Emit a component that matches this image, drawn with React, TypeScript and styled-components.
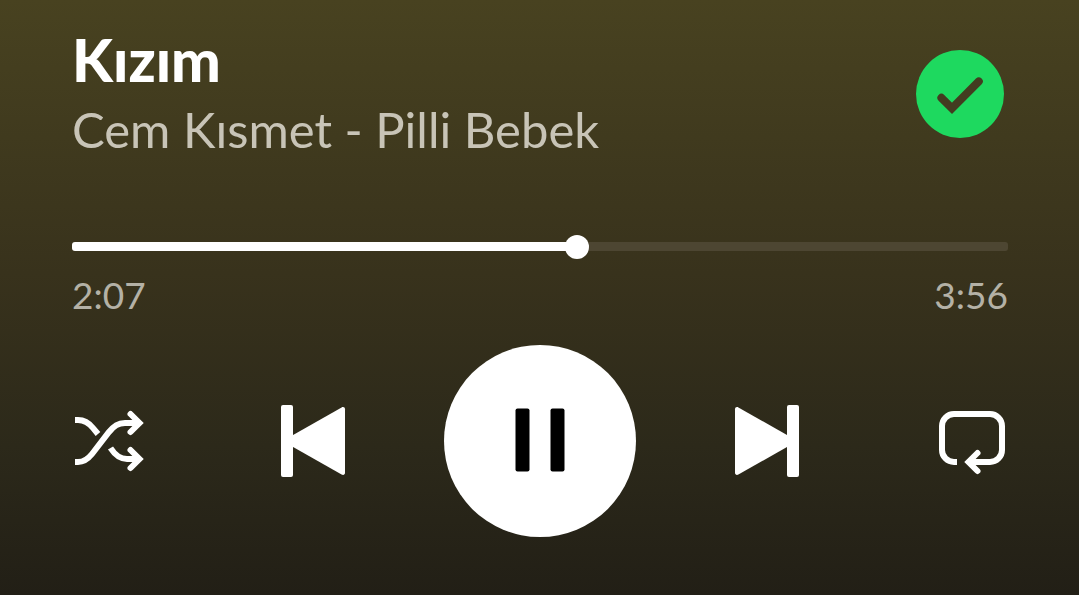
import React, { useState } from "react";
import styled, { createGlobalStyle } from "styled-components";

const GlobalStyle = createGlobalStyle`
  * { box-sizing: border-box; }
  body { margin: 0; background: #221f16; }
`;

const Player = styled.main`
  min-height: 100vh;
  padding: 28px 71px 56px 72px;
  background: linear-gradient(180deg, #484220 0%, #38321c 46%, #2c291a 75%, #221f16 100%);
  color: #ffffff;
  font-family: Lato, "Liberation Sans", sans-serif;
`;

const Header = styled.header`
  display: flex;
  align-items: flex-start;
  justify-content: space-between;
  padding-right: 4px;
`;

const Title = styled.h1`
  margin: 0;
  font-size: 59px;
  line-height: 64px;
  font-weight: 900;
`;

const Artist = styled.p`
  margin: 0;
  font-size: 49px;
  line-height: 74px;
  color: #c8c4b7;
`;

const IconButton = styled.button<{ $size: number }>`
  display: flex;
  flex: none;
  align-items: center;
  justify-content: center;
  width: ${(p) => p.$size}px;
  height: ${(p) => p.$size}px;
  padding: 0;
  border: 0;
  border-radius: 50%;
  background: none;
  color: inherit;
  cursor: pointer;
`;

const SavedButton = styled(IconButton)`
  margin-top: 22px;
  background: #1ed95f;
  color: #433c20;
`;

const PlayButton = styled(IconButton)`
  background: #ffffff;
  color: #000000;
`;

const Seek = styled.input`
  appearance: none;
  display: block;
  width: 100%;
  height: 24px;
  margin: 68px 0 0;
  background: none;
  cursor: pointer;

  &::-webkit-slider-runnable-track {
    height: 9px;
    border-radius: 3px;
    background: linear-gradient(90deg, #ffffff var(--played), #4d4632 var(--played));
  }
  &::-webkit-slider-thumb {
    appearance: none;
    width: 24px;
    height: 24px;
    margin-top: -7px;
    border-radius: 50%;
    background: #ffffff;
  }
`;

const Times = styled.div`
  display: flex;
  justify-content: space-between;
  margin-top: 15px;
  font-size: 37px;
  line-height: 44px;
  color: #b4b1a6;
`;

const Controls = styled.div`
  display: flex;
  align-items: center;
  justify-content: space-between;
  margin-top: 28px;
`;

const Transport = styled.div`
  display: flex;
  align-items: center;
  gap: 95px;
`;

const Icon = ({ children, size = 72 }: { children: React.ReactNode; size?: number }) => (
  <svg width={size} height={size} viewBox={`0 0 ${size} ${size}`} fill="none" aria-hidden="true">
    {children}
  </svg>
);

const line = { stroke: "currentColor", strokeWidth: 6 };

const CheckIcon = () => (
  <Icon size={88}>
    <path d="M25.4 47.8 36 58.4 62.8 31.4" stroke="currentColor" strokeWidth="8" strokeLinecap="round" />
  </Icon>
);

const ShuffleIcon = () => (
  <Icon>
    <path {...line} d="M3 15H6C13 15 17 18 21 23L26 29" />
    <path {...line} d="M3 57H6C12 57 16 54 20 49L37 27C42 21 46 18 53 18H66" />
    <path {...line} d="M38.5 43C43 50 48 54 55 54H66" />
    <path {...line} strokeLinecap="round" d="M58.5 9 67.5 18 58.5 27M58.5 45 67.5 54 58.5 63" />
  </Icon>
);

const SkipShape = () => (
  <>
    <rect x="4" y="0" width="12" height="72" rx="2" fill="currentColor" />
    <path d="M5.5 36 64.6 2.4C66.4 1.4 68 2.4 68 4.2V67.8C68 69.6 66.4 70.6 64.6 69.6Z" fill="currentColor" />
  </>
);

const PreviousIcon = () => (
  <Icon>
    <SkipShape />
  </Icon>
);

const NextIcon = () => (
  <Icon>
    <g transform="matrix(-1 0 0 1 72 0)">
      <SkipShape />
    </g>
  </Icon>
);

const PauseIcon = () => (
  <Icon>
    <rect x="11.5" y="3.5" width="14" height="63" rx="2" fill="currentColor" />
    <rect x="46.5" y="3.5" width="14" height="63" rx="2" fill="currentColor" />
  </Icon>
);

const PlayIcon = () => (
  <Icon>
    <path d="M16 4 64 36 16 68Z" fill="currentColor" />
  </Icon>
);

const RepeatIcon = () => (
  <Icon>
    <path {...line} d="M21 57H18A12 12 0 0 1 6 45V21A12 12 0 0 1 18 9H54A12 12 0 0 1 66 21V45A12 12 0 0 1 54 57H34" />
    <path {...line} strokeLinecap="round" d="M41.5 48 32.5 57 41.5 66" />
  </Icon>
);

const DURATION = 236;

const formatTime = (seconds: number) =>
  `${Math.floor(seconds / 60)}:${String(Math.floor(seconds % 60)).padStart(2, "0")}`;

export default function App() {
  const [position, setPosition] = useState(127.6);
  const [playing, setPlaying] = useState(true);
  const played = { "--played": `${(position / DURATION) * 100}%` } as React.CSSProperties;

  return (
    <>
      <GlobalStyle />
      <Player>
        <Header>
          <div>
            <Title>Kızım</Title>
            <Artist>Cem Kısmet - Pilli Bebek</Artist>
          </div>
          <SavedButton $size={88} aria-label="Saved to library">
            <CheckIcon />
          </SavedButton>
        </Header>
        <Seek
          type="range"
          aria-label="Seek"
          min={0}
          max={DURATION}
          step="any"
          value={position}
          style={played}
          onChange={(e) => setPosition(Number(e.target.value))}
        />
        <Times>
          <span>{formatTime(position)}</span>
          <span>{formatTime(DURATION)}</span>
        </Times>
        <Controls>
          <IconButton $size={72} aria-label="Shuffle">
            <ShuffleIcon />
          </IconButton>
          <Transport>
            <IconButton $size={72} aria-label="Previous">
              <PreviousIcon />
            </IconButton>
            <PlayButton $size={192} aria-label={playing ? "Pause" : "Play"} onClick={() => setPlaying(!playing)}>
              {playing ? <PauseIcon /> : <PlayIcon />}
            </PlayButton>
            <IconButton $size={72} aria-label="Next">
              <NextIcon />
            </IconButton>
          </Transport>
          <IconButton $size={72} aria-label="Repeat">
            <RepeatIcon />
          </IconButton>
        </Controls>
      </Player>
    </>
  );
}
